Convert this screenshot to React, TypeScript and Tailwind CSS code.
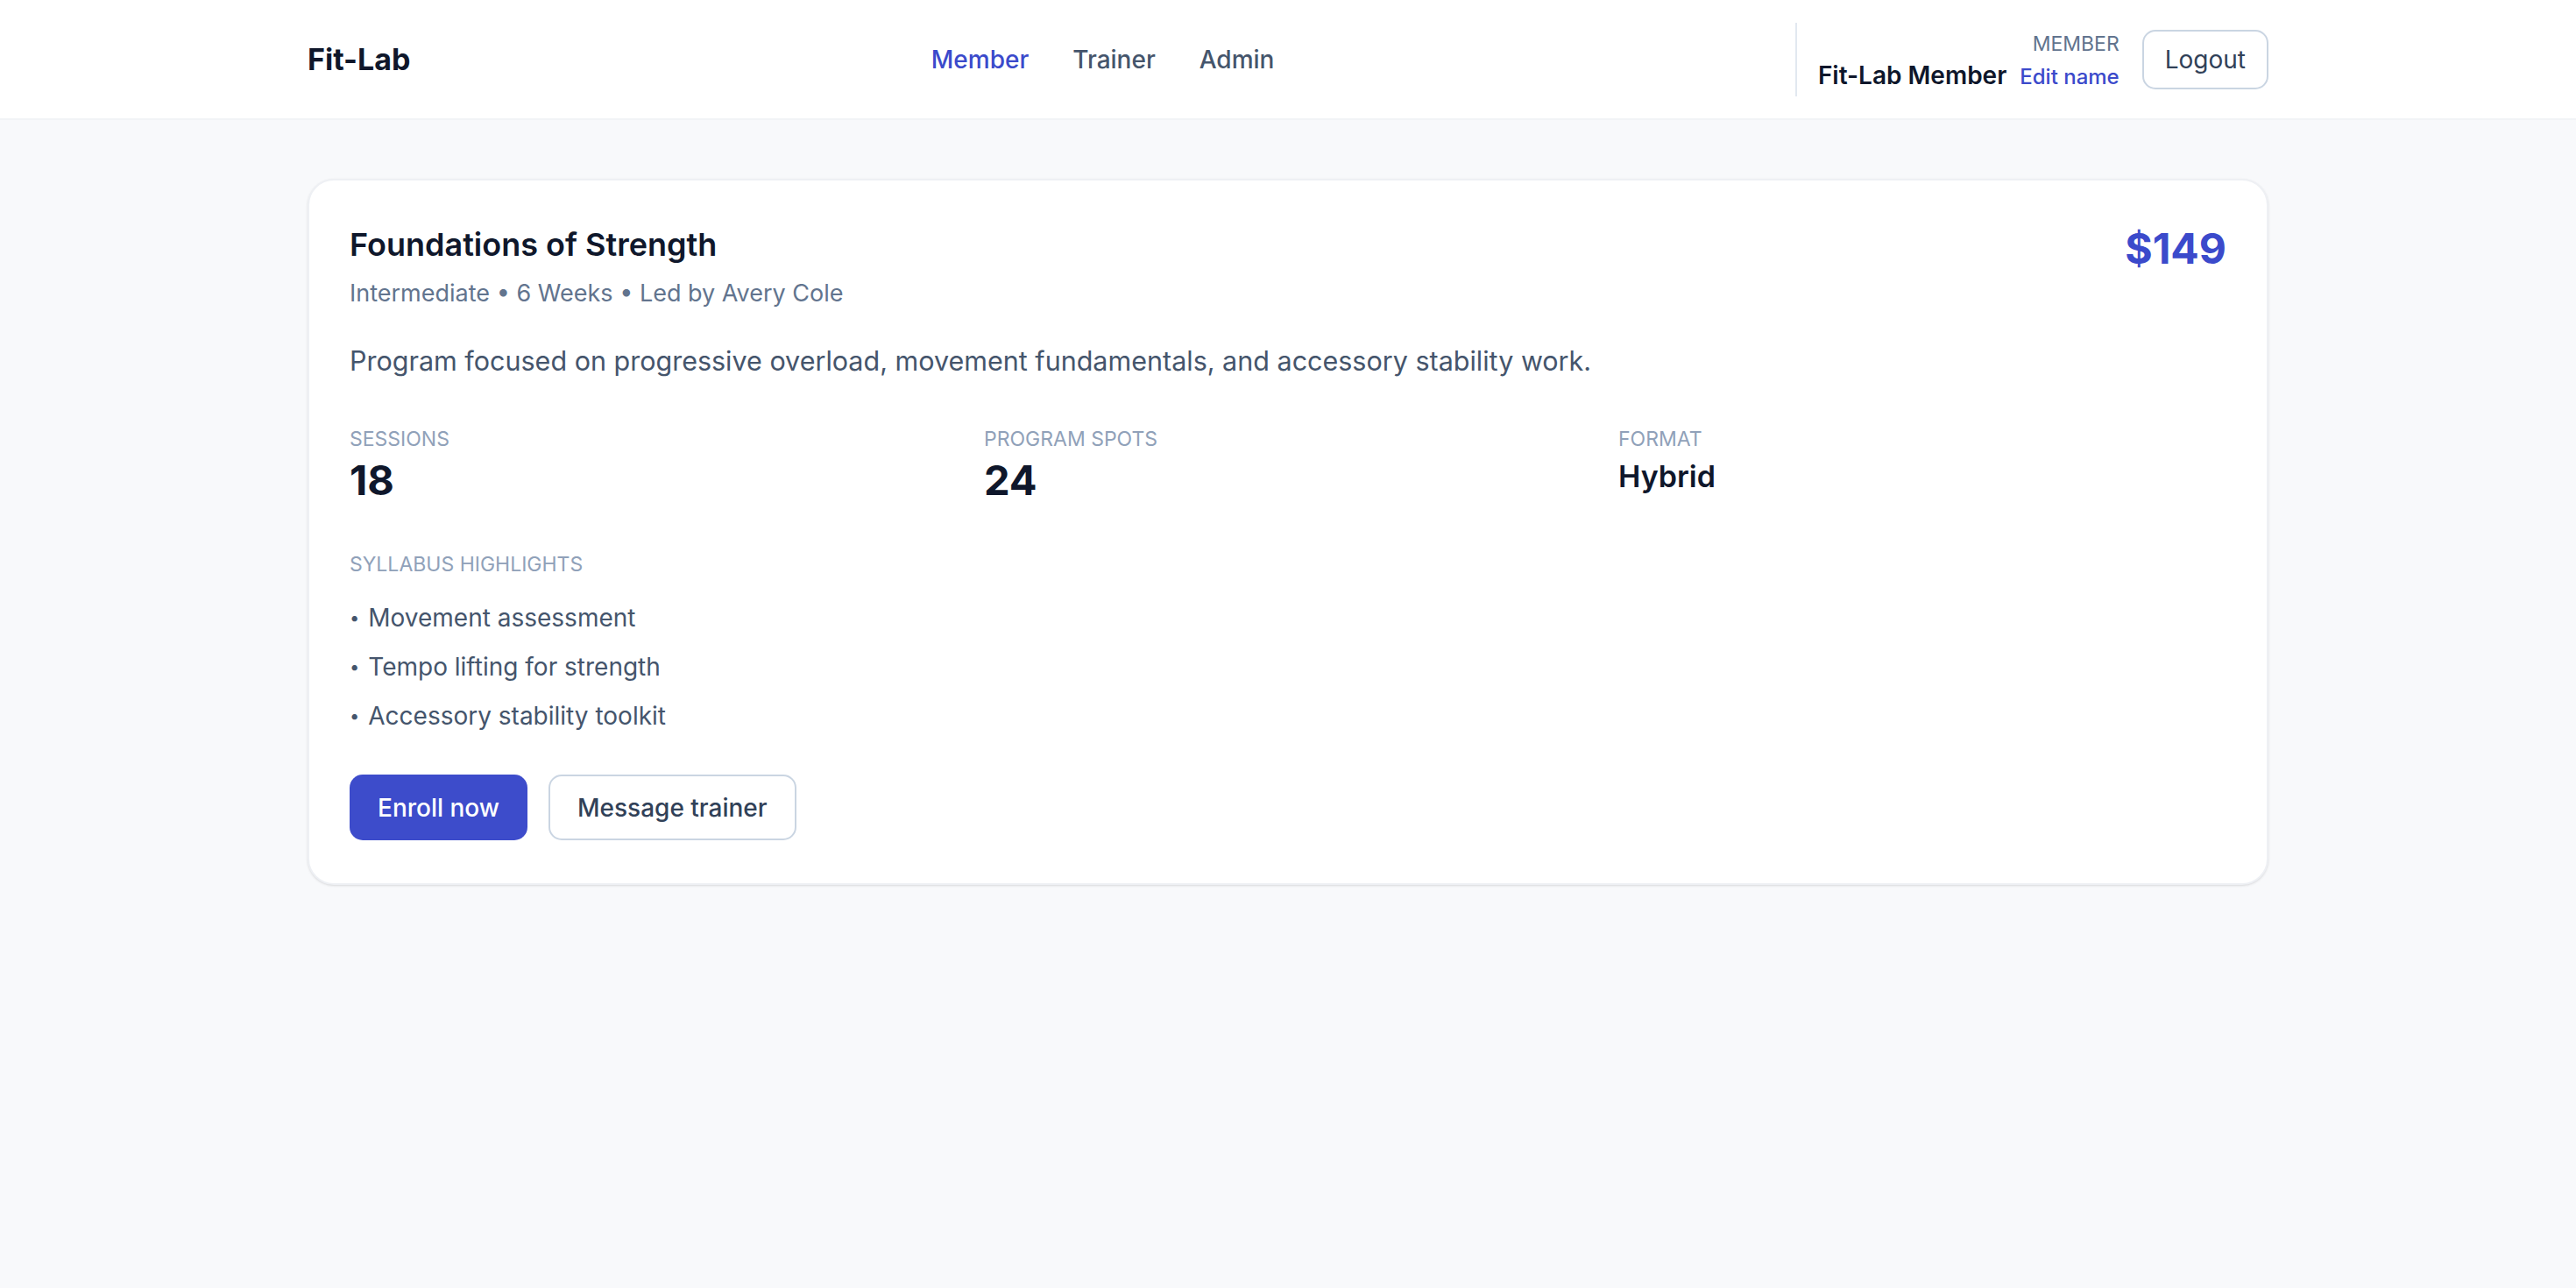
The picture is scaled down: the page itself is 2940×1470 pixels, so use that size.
import React from "react";

const stats = [
  { label: "Sessions", value: "18", big: true },
  { label: "Program spots", value: "24", big: true },
  { label: "Format", value: "Hybrid", big: false },
];

const highlights = [
  "Movement assessment",
  "Tempo lifting for strength",
  "Accessory stability toolkit",
];

function Header() {
  return (
    <header className="bg-white border-b-2 border-[#f1f3f6]">
      <div className="mx-auto w-[2238px] h-[135px] flex items-center justify-between">
        <div className="text-[34px] font-bold text-slate-900">Fit-Lab</div>

        <nav className="flex items-center gap-[50px] text-[28px] font-medium">
          <a className="text-[#3b4acb]">Member</a>
          <a className="text-slate-600">Trainer</a>
          <a className="text-slate-600">Admin</a>
        </nav>

        <div className="flex items-center">
          <div className="flex flex-col items-end border-l-2 border-slate-200 pl-[24px] pt-[8px] pb-[2px]">
            <span className="text-[23px] leading-[32px] uppercase text-slate-500">Member</span>
            <div className="flex items-baseline gap-[15px] leading-[40px]">
              <span className="text-[28px] font-semibold text-slate-900">Fit-Lab Member</span>
              <button className="text-[24px] font-medium text-[#3b4acb]">Edit name</button>
            </div>
          </div>
          <button className="ml-[26px] h-[68px] px-[24px] rounded-[15px] border-2 border-slate-300 bg-white text-[28px] text-slate-700">
            Logout
          </button>
        </div>
      </div>
    </header>
  );
}

function ProgramCard() {
  return (
    <div className="bg-white rounded-[30px] border-2 border-[#eef0f4] shadow-sm px-[46px] pt-[46px] pb-[49px]">
      <div className="flex items-start justify-between">
        <div>
          <h2 className="text-[36px] leading-[54px] font-semibold text-slate-900">Foundations of Strength</h2>
          <p className="mt-[6px] text-[27px] leading-[45px] text-slate-500">
            Intermediate • 6 Weeks • Led by Avery Cole
          </p>
        </div>
        <div className="text-[48px] leading-[64px] font-bold text-[#3b4acb]">$149</div>
      </div>

      <p className="mt-[30px] text-[30.5px] leading-[50px] text-slate-600">
        Program focused on progressive overload, movement fundamentals, and accessory stability work.
      </p>

      <div className="mt-[49px] grid grid-cols-[724px_724px_1fr]">
        {stats.map((s) => (
          <div key={s.label}>
            <div className="text-[23px] leading-[30px] uppercase text-slate-400">{s.label}</div>
            <div
              className={
                s.big
                  ? "mt-[2px] text-[47px] leading-[60px] font-bold text-slate-900"
                  : "mt-[2px] text-[34px] leading-[52px] font-semibold text-slate-900"
              }
            >
              {s.value}
            </div>
          </div>
        ))}
      </div>

      <div className="mt-[51px] text-[23px] leading-[30px] uppercase text-slate-400">Syllabus highlights</div>
      <ul className="mt-[24px] flex flex-col gap-[11px] text-[28px] leading-[45px] text-slate-600">
        {highlights.map((h) => (
          <li key={h} className="flex items-center gap-[10px]">
            <span className="text-[20px]">•</span>
            <span>{h}</span>
          </li>
        ))}
      </ul>

      <div className="mt-[44px] flex gap-[24px]">
        <button className="h-[75px] px-[32px] rounded-[15px] bg-[#3d4ccb] text-white text-[28px] font-medium">
          Enroll now
        </button>
        <button className="h-[75px] px-[31px] rounded-[15px] border-2 border-slate-300 bg-white text-slate-700 text-[28px] font-medium">
          Message trainer
        </button>
      </div>
    </div>
  );
}

export default function App() {
  return (
    <div className="min-h-screen bg-[#f8f9fb] font-['Inter',sans-serif]">
      <Header />
      <main className="mx-auto w-[2238px] pt-[67px]">
        <ProgramCard />
      </main>
    </div>
  );
}
